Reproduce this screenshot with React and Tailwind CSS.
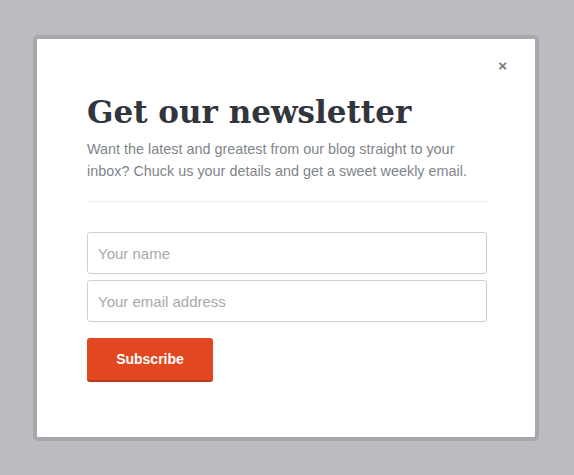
export default function App() {
  return (
    <div className="min-h-[475px] w-full bg-[#bbbcc0] pt-[35px] pl-[33px]">
      <div className="relative w-[506px] h-[406px] rounded-[5px] border-4 border-[#a7a8ab] bg-white">
        <button className="absolute right-[28px] top-[19px] text-[15px] leading-none text-[#777] font-bold" style={{ fontFamily: '"Liberation Sans", Arial, sans-serif' }}>
          ×
        </button>
        <div className="pl-[50px] pr-[48px] pt-[53px]" style={{ fontFamily: '"Liberation Sans", Arial, sans-serif' }}>
          <h1
            className="text-[31px] leading-[40px] font-bold text-[#32363c]"
            style={{ fontFamily: '"DejaVu Serif", "Liberation Serif", serif' }}
          >
            Get our newsletter
          </h1>
          <p className="mt-[6px] text-[14.4px] leading-[22px] text-[#80858b]">
            Want the latest and greatest from our blog straight to your inbox? Chuck us your details and get a sweet weekly email.
          </p>
          <div className="mt-[19px] h-px bg-[#ececec]" />
          <form className="mt-[30px] flex flex-col gap-[6px]">
            <input
              type="text"
              placeholder="Your name"
              className="h-[42px] w-full rounded-[3px] border border-[#cfcfcf] px-[10px] text-[15px] placeholder:text-[#a9a9a9] outline-none"
            />
            <input
              type="email"
              placeholder="Your email address"
              className="h-[42px] w-full rounded-[3px] border border-[#cfcfcf] px-[10px] text-[15px] placeholder:text-[#a9a9a9] outline-none"
            />
            <button
              type="button"
              className="mt-[10px] h-[44px] w-[126px] rounded-[3px] border-b-2 border-[#b9391a] bg-[#e2471f] text-[14px] font-bold text-white"
            >
              Subscribe
            </button>
          </form>
        </div>
      </div>
    </div>
  )
}
